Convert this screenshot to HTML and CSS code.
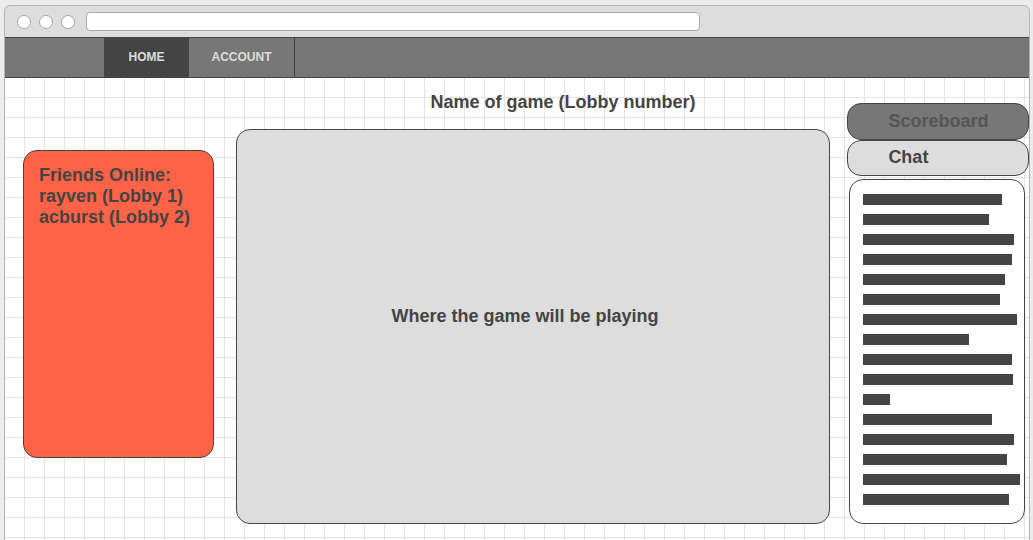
FILE: index.html
```html
<!DOCTYPE html>
<html>
<head>
<meta charset="utf-8">
<link rel="stylesheet" href="styles.css">
</head>
<body>
<div class="frame">
  <div class="topbar">
    <span class="dot"></span><span class="dot"></span><span class="dot"></span>
    <div class="address"></div>
  </div>
  <nav class="nav">
    <div class="tab active">HOME</div>
    <div class="tab">ACCOUNT</div>
  </nav>
  <main class="content">
    <section class="friends">
      <div class="friends-box">Friends Online:<br>rayven (Lobby 1)<br>acburst (Lobby 2)</div>
    </section>
    <section class="game">
      <h1 class="title">Name of game (Lobby number)</h1>
      <div class="game-box">Where the game will be playing</div>
    </section>
    <section class="side">
      <div class="btn btn-score">Scoreboard</div>
      <div class="btn btn-chat">Chat</div>
      <div class="chat">
        <div class="bar" style="width:139px"></div>
        <div class="bar" style="width:126px"></div>
        <div class="bar" style="width:151px"></div>
        <div class="bar" style="width:149px"></div>
        <div class="bar" style="width:142px"></div>
        <div class="bar" style="width:137px"></div>
        <div class="bar" style="width:154px"></div>
        <div class="bar" style="width:106px"></div>
        <div class="bar" style="width:149px"></div>
        <div class="bar" style="width:150px"></div>
        <div class="bar" style="width:27px"></div>
        <div class="bar" style="width:129px"></div>
        <div class="bar" style="width:151px"></div>
        <div class="bar" style="width:144px"></div>
        <div class="bar" style="width:157px"></div>
        <div class="bar" style="width:146px"></div>
      </div>
    </section>
  </main>
</div>
</body>
</html>
```
FILE: styles.css
```css
html, body {
  margin: 0;
  padding: 0;
}
body {
  background: #ececec;
  font-family: "Liberation Sans", Arial, sans-serif;
  width: 1033px;
  height: 540px;
  overflow: hidden;
}
.frame {
  margin: 5px 0 0 4px;
  width: 1024px;
  height: 560px;
  border: 1px solid #b4b4b4;
  border-radius: 6px 6px 0 0;
  background: #dddddd;
  overflow: hidden;
}
.topbar {
  height: 31px;
  display: flex;
  align-items: center;
  padding-left: 12px;
  gap: 8px;
}
.dot {
  width: 12px;
  height: 12px;
  border: 1px solid #a8a8a8;
  border-radius: 50%;
  background: #fff;
}
.address {
  margin-left: 3px;
  width: 612px;
  height: 17px;
  background: #fff;
  border: 1px solid #a8a8a8;
  border-radius: 4px;
}
.nav {
  height: 39px;
  background: #777777;
  border-top: 1px solid #444;
  border-bottom: 1px solid #444;
  display: flex;
  padding-left: 99px;
}
.tab {
  display: flex;
  align-items: center;
  justify-content: center;
  padding-bottom: 1px;
  color: #dddddd;
  font-size: 12px;
  font-weight: bold;
}
.tab.active {
  width: 85px;
  background: #444444;
}
.tab:not(.active) {
  width: 105px;
  border-right: 1px solid #444;
}
.content {
  height: 470px;
  background-color: #ffffff;
  background-image:
    linear-gradient(to right, #e4e4e4 1px, transparent 1px),
    linear-gradient(to bottom, #e4e4e4 1px, transparent 1px);
  background-size: 20px 20px;
  background-position: 19px 19px;
  display: flex;
  align-items: flex-start;
  padding-left: 18px;
  color: #444444;
  font-weight: bold;
}
.friends {
  margin-top: 72px;
  width: 191px;
}
.friends-box {
  box-sizing: border-box;
  height: 308px;
  background: #ff6347;
  border: 1px solid #444;
  border-radius: 14px;
  padding: 14px 15px;
  font-size: 18px;
  line-height: 21px;
}
.game {
  margin-left: 22px;
  width: 596px;
}
.title {
  margin: 13px 0 0 0;
  font-size: 18px;
  line-height: 22px;
  text-align: center;
  font-weight: bold;
  padding-left: 60px;
}
.game-box {
  box-sizing: border-box;
  margin-top: 16px;
  height: 395px;
  background: #dddddd;
  border: 1px solid #444;
  border-radius: 14px;
  display: flex;
  align-items: center;
  justify-content: center;
  padding: 0 16px 20px 0;
  font-size: 18px;
}
.side {
  margin-left: 17px;
  margin-top: 25px;
  width: 182px;
  display: flex;
  flex-direction: column;
}
.btn {
  box-sizing: border-box;
  border: 1px solid #444;
  border-radius: 14px;
  padding-left: 40px;
  display: flex;
  align-items: center;
  font-size: 18px;
}
.btn-score {
  height: 37px;
  background: #777777;
  color: #555555;
}
.btn-chat {
  height: 36px;
  padding-bottom: 2px;
  background: #dddddd;
  color: #444444;
}
.chat {
  box-sizing: border-box;
  margin: 3px 0 0 2px;
  width: 176px;
  height: 345px;
  background: #fff;
  border: 1px solid #444;
  border-radius: 14px;
  padding: 14px 0 0 13px;
  display: flex;
  flex-direction: column;
  gap: 9px;
}
.bar {
  height: 11px;
  background: #444444;
  flex: none;
}
```
